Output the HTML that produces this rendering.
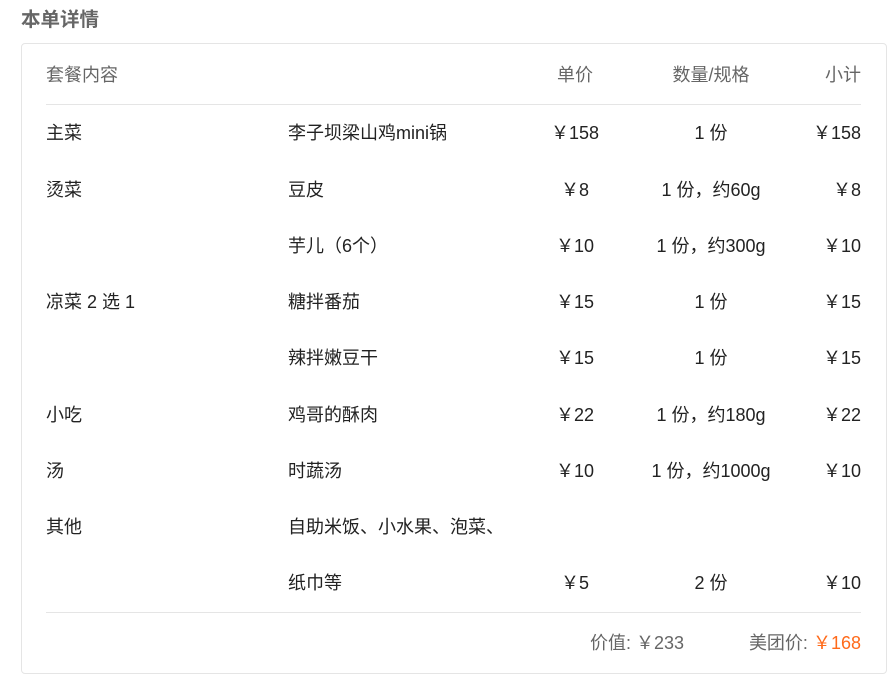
<!DOCTYPE html>
<html><head><meta charset="utf-8"><style>
body{margin:0;width:891px;height:677px;background:#fff;font-family:"Liberation Sans","Noto Sans CJK SC",sans-serif;position:relative;overflow:hidden}
.t{position:absolute;left:21px;top:7px;font-size:19.5px;font-weight:bold;color:#666;line-height:26px}
.box{position:absolute;left:21px;top:43px;width:866px;height:631px;border:1px solid #e5e5e5;border-radius:4px;box-sizing:border-box}
.r{position:absolute;left:46px;width:815px;height:26px;line-height:26px;font-size:18px;color:#222}
.r span{position:absolute;top:0;white-space:nowrap}
.c1{left:0}.c2{left:242px}.c3{left:479px;width:100px;text-align:center}.c4{left:585px;width:160px;text-align:center}.c5{right:0;text-align:right}
.h{color:#666}
.line{position:absolute;left:46px;width:815px;height:1px;background:#e5e5e5}
</style></head><body>
<div class="t">本单详情</div>
<div class="box"></div>
<div class="r h" style="top:62px"><span class="c1">套餐内容</span><span class="c3">单价</span><span class="c4">数量/规格</span><span class="c5">小计</span></div>
<div class="line" style="top:104px"></div>
<div class="r" style="top:120px"><span class="c1">主菜</span><span class="c2">李子坝梁山鸡mini锅</span><span class="c3">￥158</span><span class="c4">1 份</span><span class="c5">￥158</span></div>
<div class="r" style="top:177px"><span class="c1">烫菜</span><span class="c2">豆皮</span><span class="c3">￥8</span><span class="c4">1 份，约60g</span><span class="c5">￥8</span></div>
<div class="r" style="top:233px"><span class="c2">芋儿（6个）</span><span class="c3">￥10</span><span class="c4">1 份，约300g</span><span class="c5">￥10</span></div>
<div class="r" style="top:289px"><span class="c1">凉菜 2 选 1</span><span class="c2">糖拌番茄</span><span class="c3">￥15</span><span class="c4">1 份</span><span class="c5">￥15</span></div>
<div class="r" style="top:345px"><span class="c2">辣拌嫩豆干</span><span class="c3">￥15</span><span class="c4">1 份</span><span class="c5">￥15</span></div>
<div class="r" style="top:402px"><span class="c1">小吃</span><span class="c2">鸡哥的酥肉</span><span class="c3">￥22</span><span class="c4">1 份，约180g</span><span class="c5">￥22</span></div>
<div class="r" style="top:458px"><span class="c1">汤</span><span class="c2">时蔬汤</span><span class="c3">￥10</span><span class="c4">1 份，约1000g</span><span class="c5">￥10</span></div>
<div class="r" style="top:514px"><span class="c1">其他</span><span class="c2">自助米饭、小水果、泡菜、</span></div>
<div class="r" style="top:570px"><span class="c2">纸巾等</span><span class="c3">￥5</span><span class="c4">2 份</span><span class="c5">￥10</span></div>
<div class="line" style="top:612px"></div>
<div class="r h" style="top:630px"><span style="right:177px">价值: ￥233</span><span class="c5">美团价: <span style="position:static;color:#ff6a1a">￥168</span></span></div>
</body></html>
